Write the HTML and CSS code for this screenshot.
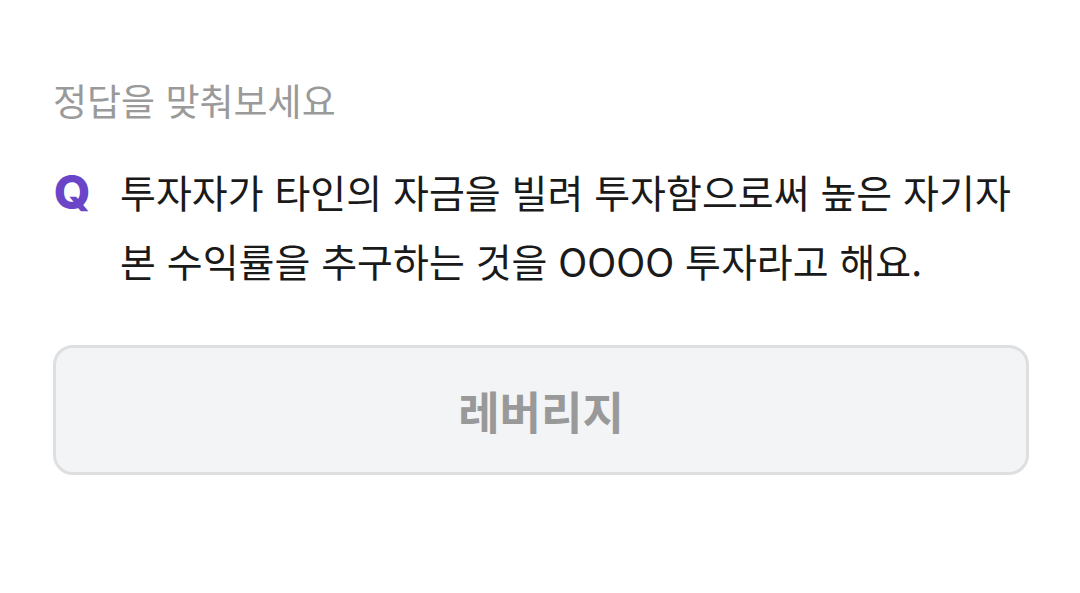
FILE: index.html
```html
<!DOCTYPE html>
<html lang="ko">

<head>
    <meta charset="UTF-8">
    <meta name="viewport" content="width=device-width, initial-scale=1.0">
    <title>퀴즈</title>
    <link rel="stylesheet" href="styles.css">
</head>

<body>
    <div class="quiz">
        <p class="quiz-label">정답을 맞춰보세요</p>
        <div class="question">
            <span class="question-mark">Q</span>
            <p class="question-text">투자자가 타인의 자금을 빌려 투자함으로써 높은 자기자본 수익률을 추구하는 것을 OOOO 투자라고 해요.</p>
        </div>
        <div class="answer-box">
            <span class="answer-text">레버리지</span>
        </div>
    </div>
</body>

</html>
```

FILE: styles.css
```css
/* General body styling */
body {
    font-family: 'Noto Sans CJK KR', 'Noto Sans', sans-serif;
    background-color: #fff;
    color: #222;
    margin: 0;
}

.quiz {
    padding: 76px 51px 0 53px;
}

.quiz-label {
    margin: 0;
    font-size: 37px;
    line-height: 48px;
    color: #9a9a9a;
}

.question {
    display: flex;
    gap: 29px;
    margin-top: 33px;
}

.question-mark {
    flex: none;
    width: 38px;
    font-family: 'Inter', sans-serif;
    font-weight: 800;
    font-size: 47px;
    line-height: 69px;
    color: #6a45c8;
    text-align: center;
}

.question-text {
    margin: 0;
    font-size: 39px;
    line-height: 69px;
    color: #1a1a1a;
}

.answer-box {
    margin-top: 50px;
    height: 124px;
    border: 3px solid #dedfe1;
    border-radius: 20px;
    background-color: #f3f4f6;
    display: flex;
    justify-content: center;
    align-items: center;
}

.answer-text {
    font-size: 45px;
    font-weight: 700;
    color: #999;
}
```
